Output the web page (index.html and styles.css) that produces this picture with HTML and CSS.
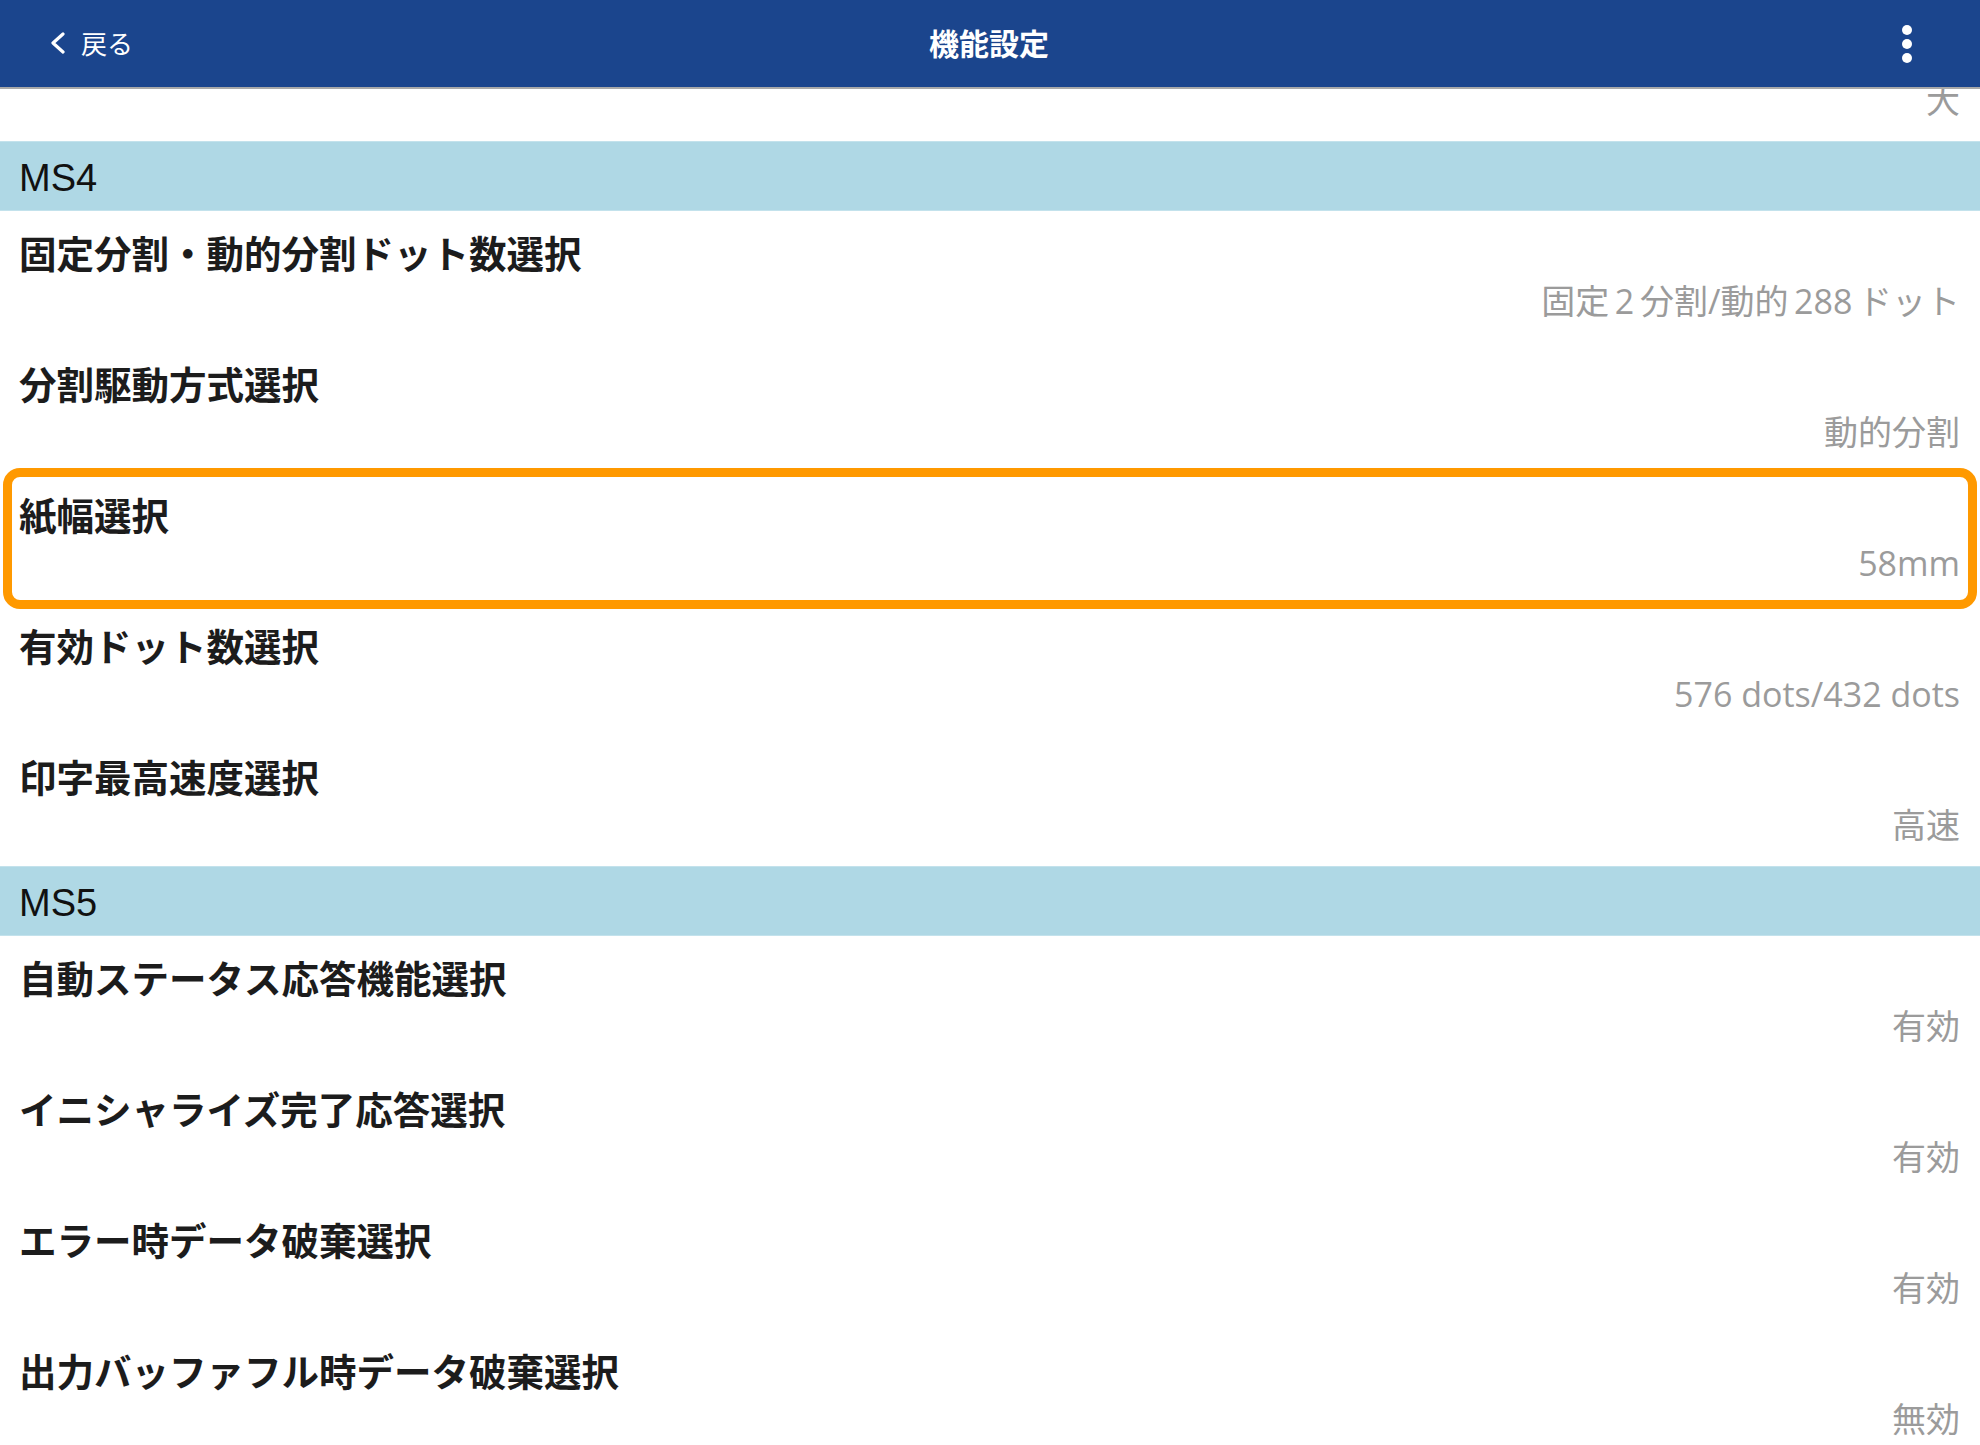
FILE: index.html
```html
<!DOCTYPE html>
<html lang="ja">
<head>
    <meta charset="UTF-8">
    <meta name="viewport" content="width=device-width, initial-scale=1.0">
    <title>機能設定</title>
    <link rel="stylesheet" href="styles.css">
</head>
<body>
    <div class="top-bar">
        <a class="back" href="#">
            <svg class="chevron" width="16" height="22" viewBox="0 0 16 22">
                <polyline points="13,2 3,11 13,20" fill="none" stroke="#fff" stroke-width="3.2" stroke-linecap="round" stroke-linejoin="round"/>
            </svg>
            <span>戻る</span>
        </a>
        <div class="title">機能設定</div>
        <div class="menu">
            <span class="dot"></span>
            <span class="dot"></span>
            <span class="dot"></span>
        </div>
    </div>

    <div class="settings">
        <!-- row scrolled up under the bar, only its value shows -->
        <div class="row">
            <div class="row-title"></div>
            <div class="row-value">大</div>
        </div>

        <div class="section">MS4</div>
        <div class="row">
            <div class="row-title">固定分割・動的分割ドット数選択</div>
            <div class="row-value">固定&thinsp;2&thinsp;分割/動的&thinsp;288&thinsp;ドット</div>
        </div>
        <div class="row">
            <div class="row-title">分割駆動方式選択</div>
            <div class="row-value">動的分割</div>
        </div>
        <div class="row selected">
            <div class="row-title">紙幅選択</div>
            <div class="row-value">58mm</div>
        </div>
        <div class="row">
            <div class="row-title">有効ドット数選択</div>
            <div class="row-value">576 dots/432 dots</div>
        </div>
        <div class="row">
            <div class="row-title">印字最高速度選択</div>
            <div class="row-value">高速</div>
        </div>

        <div class="section">MS5</div>
        <div class="row">
            <div class="row-title">自動ステータス応答機能選択</div>
            <div class="row-value">有効</div>
        </div>
        <div class="row">
            <div class="row-title">イニシャライズ完了応答選択</div>
            <div class="row-value">有効</div>
        </div>
        <div class="row">
            <div class="row-title">エラー時データ破棄選択</div>
            <div class="row-value">有効</div>
        </div>
        <div class="row">
            <div class="row-title">出力バッファフル時データ破棄選択</div>
            <div class="row-value">無効</div>
        </div>
    </div>
</body>
</html>
```

FILE: styles.css
```css
html, body {
    height: 100%;
}

body {
    margin: 0;
    padding-top: 10px;
    box-sizing: border-box;
    overflow: hidden;
    background: #ffffff;
    font-family: "Noto Sans CJK JP", sans-serif;
}

.top-bar {
    position: fixed;
    top: 0;
    left: 0;
    right: 0;
    height: 89px;
    z-index: 10;
    display: flex;
    align-items: center;
    justify-content: space-between;
    background-color: #1b458d;
    border-bottom: 2px solid #a9a9a9;
    padding: 0 0 4px 50px;
    box-sizing: border-box;
}

.back {
    display: flex;
    align-items: center;
    gap: 15px;
    width: 260px;
    color: #ffffff;
    text-decoration: none;
    font-size: 26px;
    padding-top: 2px;
}

.title {
    color: #ffffff;
    font-size: 30px;
    font-weight: bold;
    margin-left: -52px;
}

.menu {
    width: 260px;
    display: flex;
    flex-direction: column;
    align-items: flex-end;
    gap: 4px;
    padding: 4px 68px 0 0;
    box-sizing: border-box;
}

.dot {
    width: 10px;
    height: 10px;
    border-radius: 50%;
    background: #ffffff;
}

.section {
    height: 70px;
    box-sizing: border-box;
    display: flex;
    align-items: center;
    padding: 4px 0 0 19px;
    background-color: #afd8e5;
    border-top: 1px solid #c3e2ec;
    border-bottom: 1px solid #c3e2ec;
    font-family: "Liberation Sans", sans-serif;
    font-size: 38px;
    color: #111111;
}

.row {
    position: relative;
    height: 131px;
    box-sizing: border-box;
    padding: 17px 20px 19px 19px;
}

.row-title {
    height: 51px;
    line-height: 48px;
    font-size: 37.5px;
    font-weight: bold;
    color: #1c1c1c;
}

.row-value {
    line-height: 44px;
    text-align: right;
    font-family: "Open Sans", "Noto Sans CJK JP", sans-serif;
    font-size: 34px;
    color: #9b9b9b;
}

.selected::after {
    content: "";
    position: absolute;
    top: -5px;
    bottom: -5px;
    left: 3px;
    right: 3px;
    border: 9px solid #ff9900;
    border-radius: 17px;
}
```
